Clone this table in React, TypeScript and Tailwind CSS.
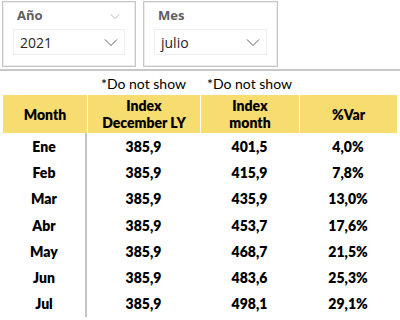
import React from "react";

const rows: [string, string, string, string][] = [
  ["Ene", "385,9", "401,5", "4,0%"],
  ["Feb", "385,9", "415,9", "7,8%"],
  ["Mar", "385,9", "435,9", "13,0%"],
  ["Abr", "385,9", "453,7", "17,6%"],
  ["May", "385,9", "468,7", "21,5%"],
  ["Jun", "385,9", "483,6", "25,3%"],
  ["Jul", "385,9", "498,1", "29,1%"],
];

function Chevron({ size = 14, color = "#605e5c" }: { size?: number; color?: string }) {
  return (
    <svg width={size} height={size / 2} viewBox="0 0 14 7" fill="none">
      <polyline points="1,0.5 7,6.5 13,0.5" stroke={color} strokeWidth="1" />
    </svg>
  );
}

function Slicer({ title, value, width }: { title: string; value: string; width: string }) {
  return (
    <div className={`${width} h-[66px] border border-[#c6c6c6] shadow-[inset_0_0_0_1px_#ececec] px-[10px] pt-[5px]`}>
      <div className="flex items-center justify-between pl-[4px] pr-[5px] h-[18px]">
        <span className="text-[13px] font-bold text-[#605e5c]">{title}</span>
        {title === "Año" && <Chevron size={10} color="#a19f9d" />}
      </div>
      <div className="mt-[4px] h-[26px] border border-[#ededed] flex items-center justify-between pl-[6px] pr-[6px]">
        <span className="text-[14px] text-[#252423]">{value}</span>
        <Chevron />
      </div>
    </div>
  );
}

export default function App() {
  return (
    <div className="w-[400px] h-[320px] bg-white overflow-hidden font-['Open_Sans',sans-serif]">
      <div className="flex pl-[2px] pt-[1px] gap-[7px]">
        <Slicer title="Año" value="2021" width="w-[134px]" />
        <Slicer title="Mes" value="julio" width="w-[135px]" />
      </div>
      <div className="mt-[2px] h-[2px] bg-[#c8c8c8]" />
      <div className="font-['Lato',sans-serif] text-black">
        <div className="flex ml-[3px] h-[24px] items-center text-[14px]">
          <div className="w-[84px]" />
          <div className="w-[113px] text-center">*Do not show</div>
          <div className="w-[99px] text-center">*Do not show</div>
        </div>
        <div className="flex ml-[3px] w-[394px] h-[38px] bg-[#f7dc70] font-extrabold text-[14px] leading-[17px]">
          <div className="w-[84px] flex items-center justify-center">Month</div>
          <div className="w-[113px] flex items-center justify-center text-center border-l border-white">
            Index
            <br />
            December LY
          </div>
          <div className="w-[99px] flex items-center justify-center text-center border-l border-white">
            Index
            <br />
            month
          </div>
          <div className="w-[98px] flex items-center justify-center border-l border-white">%Var</div>
        </div>
        <div className="ml-[3px] w-[394px] font-extrabold text-[14px]">
          {rows.map((r) => (
            <div key={r[0]} className="flex h-[26.3px] items-center">
              <div className="w-[84px] h-full flex items-center justify-center border-r-2 border-[#c4c4c4]">{r[0]}</div>
              <div className="w-[113px] text-center">{r[1]}</div>
              <div className="w-[99px] text-center">{r[2]}</div>
              <div className="w-[98px] text-center">{r[3]}</div>
            </div>
          ))}
        </div>
      </div>
    </div>
  );
}
